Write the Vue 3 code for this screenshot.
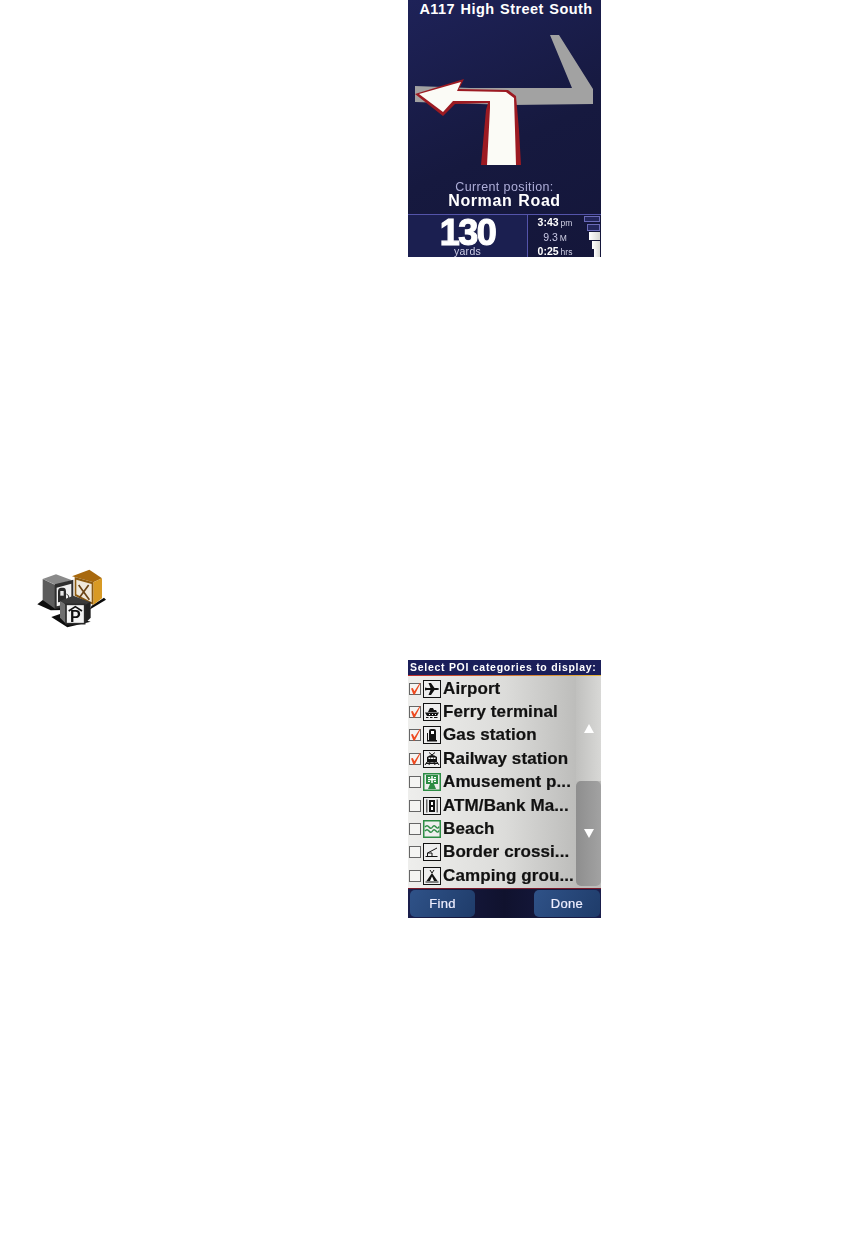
<script setup>
const rows = [
  { label: 'Airport', on: true, kind: 'plane' },
  { label: 'Ferry terminal', on: true, kind: 'ferry' },
  { label: 'Gas station', on: true, kind: 'gas' },
  { label: 'Railway station', on: true, kind: 'train' },
  { label: 'Amusement p...', on: false, kind: 'park', green: true },
  { label: 'ATM/Bank Ma...', on: false, kind: 'atm' },
  { label: 'Beach', on: false, kind: 'beach', green: true },
  { label: 'Border crossi...', on: false, kind: 'border' },
  { label: 'Camping grou...', on: false, kind: 'camp' }
]
const bars = [
  { w: 16, h: 6, mb: 2, lit: false },
  { w: 13, h: 7, mb: 1, lit: false },
  { w: 11, h: 8, mb: 1, lit: true },
  { w: 8, h: 8, mb: 0, lit: true },
  { w: 6, h: 8, mb: 0, lit: true }
]
</script>

<template>
  <main class="page">
    <section class="nav">
      <h1 class="street">A117 High Street South</h1>
      <svg class="map" viewBox="408 22 193 152" width="193" height="152">
        <polygon points="550,35 559,35 593,89 593,104 512,105 415,102 415,86 470,88 572,88" fill="#a2a2a2" />
        <polygon points="415,94 464,79 459,89 508,90 516,96 519,130 521,165 481,165 486,110 488,103 455,104 443,116" fill="#9c1a22" />
        <polygon points="419,94 461,82 457,91 506,92 514,98 515,130 516,165 487,165 490,108 490,101 453,101 443,112" fill="#fbfbf6" />
      </svg>
      <div class="where">
        <p class="where-label">Current position:</p>
        <p class="where-road">Norman Road</p>
      </div>
      <div class="stats">
        <div class="distance">
          <strong>130</strong>
          <span>yards</span>
        </div>
        <div class="trip">
          <p><b>3:43</b><small>pm</small></p>
          <p class="dim">9.3<small>M</small></p>
          <p><b>0:25</b><small>hrs</small></p>
        </div>
        <div class="bars">
          <i v-for="(b, n) in bars" :key="n" :class="{ lit: b.lit }"
             :style="{ width: b.w + 'px', height: b.h + 'px', marginBottom: b.mb + 'px' }"></i>
        </div>
      </div>
    </section>

    <svg class="poi-icon" viewBox="0 0 255 210" width="85" height="70">
      <!-- shadows -->
      <polygon points="22,118 42,102 105,135 62,136" fill="#0c0c0c" />
      <polygon points="185,122 222,98 228,104 178,134" fill="#0c0c0c" />
      <polygon points="64,156 92,146 182,170 112,187" fill="#0c0c0c" />
      <!-- pump cube -->
      <polygon points="38,42 78,28 126,46 78,60" fill="#8a8a8a" />
      <polygon points="38,42 76,60 76,132 38,105" fill="#5c5c5c" />
      <polygon points="74,58 130,44 130,122 74,132" fill="#2e2e2e" />
      <polygon points="80,68 124,56 124,114 80,124" fill="#f1f1f1" />
      <path d="M84 112V80q0-12 10-12h6q8 0 8 12v29z" fill="#2a2a2a" />
      <path d="M91 78h10v14H91z" fill="#e8e8e8" />
      <path d="M109 86l7 7v14" fill="none" stroke="#2a2a2a" stroke-width="3" />
      <!-- cutlery cube -->
      <polygon points="126,34 178,14 216,40 190,52" fill="#a8690e" />
      <polygon points="190,52 216,40 216,100 190,120" fill="#d89a24" />
      <polygon points="134,36 190,52 190,120 134,92" fill="#8c5a10" />
      <polygon points="139,44 185,57 185,112 139,88" fill="#efe9dc" />
      <path d="M146 60l32 44M176 60l-28 38" stroke="#6b4516" stroke-width="5" fill="none" />
      <!-- parking cube -->
      <polygon points="90,108 130,92 182,112 164,122 108,122" fill="#3a3a3a" />
      <polygon points="90,108 108,120 108,176 90,158" fill="#6e6e6e" />
      <polygon points="164,120 182,110 182,158 164,176" fill="#222" />
      <rect x="108" y="118" width="56" height="58" fill="#f4f4f4" stroke="#2a2a2a" stroke-width="5" />
      <path d="M116 138l20-13 20 13" fill="none" stroke="#111" stroke-width="5" />
      <text x="136" y="172" class="poi-p">P</text>
    </svg>

    <section class="list">
      <header class="list-head">Select POI categories to display:</header>
      <div class="list-body">
        <ul class="rows">
          <li v-for="r in rows" :key="r.label" class="row">
            <span class="check">
              <svg v-if="r.on" viewBox="0 0 12 12" width="12" height="12">
                <path d="M2 5.500L3.800 5 5.400 8.200 10.800 0 11.400 .5 5.800 11.500 4.400 11.500z" fill="#ee4a20" />
              </svg>
            </span>
            <span class="glyph" :class="{ green: r.green }">
              <svg viewBox="0 0 16 16" width="16" height="16" :fill="r.green ? '#2c8c44' : '#111'">
                <path v-if="r.kind === 'plane'" d="M1 6.500l2 .5h3.500L4.500 2H7l3.500 5H13q2 .2 2 1t-2 1h-2.500L7 14H4.500l2-5H3l-2 .5z" />
                <g v-else-if="r.kind === 'ferry'">
                  <path d="M6 4h3l1 2h2l1 2H4z" />
                  <path d="M1 8.500h14l-2 3.500H3z" />
                  <path d="M5 10h1v1H5zM8 10h1v1H8zM11 10h1v1h-1z" fill="#fff" />
                  <path d="M2 13.500h2.500M6 13.500h2.500M10 13.500h3.500" stroke="#111" fill="none" />
                </g>
                <g v-else-if="r.kind === 'gas'">
                  <path d="M5 13V4q0-2 2-2h3q2 0 2 2v9z" />
                  <path d="M7 4h3v3H7z" fill="#fff" />
                  <path d="M3.500 13V6" stroke="#111" fill="none" />
                  <path d="M3 13h10v1.500H3z" />
                </g>
                <g v-else-if="r.kind === 'train'">
                  <path d="M3 6q5-4 10 0v5H3z" />
                  <path d="M4.500 6.500h2V8h-2zM7 6.500h2V8H7zM9.500 6.500h2V8h-2z" fill="#fff" />
                  <path d="M1 14l2-3h10l2 3M5 14l1-3M11 14l-1-3M2 12.500h12M5 1.500l3 2.500 3-2.500" stroke="#111" fill="none" />
                </g>
                <g v-else-if="r.kind === 'park'">
                  <path d="M2 1h12v9H2z" />
                  <path d="M8 2v7M4 5.500h8" stroke="#fff" stroke-width="1.500" />
                  <path d="M4 3h2v1H4zM10 3h2v1h-2zM4 7h2v1H4zM10 7h2v1h-2z" fill="#fff" />
                  <path d="M4 15l2-5h4l2 5z" />
                </g>
                <g v-else-if="r.kind === 'atm'">
                  <path d="M2 1.500h1.500v13H2zM12.500 1.500H14v13h-1.500z" fill="#666" />
                  <path d="M5 2h6v12H5z" />
                  <path d="M7 4h2v3H7zM7 9h2v3H7z" fill="#fff" />
                </g>
                <g v-else-if="r.kind === 'beach'" fill="none" stroke="#2c8c44" stroke-width="1.400">
                  <path d="M1 6q2-2.500 4 0t3.500 0 3.500 0 3-.5M1 10q2-2.500 4 0t3.500 0 3.500 0 3-.5" />
                </g>
                <g v-else-if="r.kind === 'border'" fill="none" stroke="#111">
                  <path d="M1.500 12.500h12M3.500 12.500V9l9.500-5M3.500 9H8v3.500" />
                </g>
                <g v-else>
                  <path d="M8 5l5.500 8h-11z" />
                  <path d="M8 8.500l2 4.500H6z" fill="#fff" />
                  <path d="M6 2l2 3 2-3M1.500 14h13" stroke="#111" fill="none" />
                </g>
              </svg>
            </span>
            <span class="label">{{ r.label }}</span>
          </li>
        </ul>
        <div class="scroll">
          <div class="scroll-up"><i class="tri up"></i></div>
          <div class="scroll-down"><i class="tri down"></i></div>
        </div>
      </div>
      <footer class="list-foot">
        <button class="btn find">Find</button>
        <button class="btn done">Done</button>
      </footer>
    </section>
  </main>
</template>

<style>
html, body { background: #fff; }
</style>

<style scoped>
.page {
  width: 863px;
  height: 1248px;
  background: #fff;
  font-family: "Liberation Sans", Arial, sans-serif;
  overflow: hidden;
}
p, h1, ul { margin: 0; padding: 0; }
.nav {
  width: 193px;
  height: 257px;
  margin-left: 408px;
  display: flex;
  flex-direction: column;
  background: linear-gradient(155deg, #1e2258 0%, #16193f 55%, #14163a 100%);
  filter: blur(.35px);
}
.street {
  height: 22px;
  flex: none;
  padding-left: 3px;
  color: #fff;
  font-size: 14.500px;
  font-weight: 700;
  line-height: 18px;
  text-align: center;
  letter-spacing: .45px;
  word-spacing: 1px;
  white-space: nowrap;
}
.map { display: block; flex: none; }
.where {
  height: 40px;
  flex: none;
  text-align: center;
}
.where-label {
  font-size: 12.500px;
  line-height: 13px;
  color: #aeaed8;
  letter-spacing: .4px;
  padding-top: 7px;
}
.where-road {
  font-size: 16px;
  font-weight: 700;
  line-height: 14px;
  color: #fff;
  letter-spacing: .6px;
  word-spacing: 1px;
}
.stats {
  height: 42px;
  flex: none;
  border-top: 1px solid #5454aa;
  display: flex;
  position: relative;
}
.distance {
  width: 120px;
  box-sizing: border-box;
  border-right: 1px solid #5454aa;
  text-align: center;
  color: #fff;
  background: #1b1f50;
  display: flex;
  flex-direction: column;
  align-items: center;
}
.distance strong {
  font-size: 36px;
  line-height: 26px;
  height: 26px;
  letter-spacing: -1.5px;
  -webkit-text-stroke: 1.2px #fff;
  padding-top: 5px;
}
.distance span {
  font-size: 10.500px;
  line-height: 10px;
  color: #cfcfe6;
  letter-spacing: .3px;
}
.trip {
  width: 50px;
  padding-left: 2px;
  color: #fff;
  text-align: center;
  font-size: 10.500px;
  line-height: 14.500px;
}
.trip .dim { color: #c8c8e4; }
.trip small {
  font-size: 8.500px;
  line-height: 0;
  margin-left: 2px;
  color: #d0d0e4;
}
.bars {
  position: absolute;
  right: 1px;
  top: 1px;
  display: flex;
  flex-direction: column;
  align-items: flex-end;
}
.bars i {
  display: block;
  box-sizing: border-box;
  border: 1px solid #6a6ab8;
  background: #23265c;
}
.bars i.lit {
  border: 0;
  background: linear-gradient(90deg, #fff, #d8d8d4);
}
.poi-icon {
  display: block;
  margin: 308px 0 0 30px;
  filter: blur(.35px);
}
.poi-p {
  font-size: 48px;
  font-weight: 700;
  text-anchor: middle;
  fill: #111;
}
.list {
  width: 193px;
  height: 258px;
  margin: 25px 0 0 408px;
  display: flex;
  flex-direction: column;
  background: #14163a;
  filter: blur(.3px);
}
.list-head {
  height: 15px;
  flex: none;
  background: #1b1f5a;
  border-bottom: 1px solid;
  border-image: linear-gradient(90deg, #c02a2a, #e8b83a) 1;
  color: #fff;
  font-size: 10.500px;
  font-weight: 700;
  line-height: 15px;
  padding-left: 2px;
  letter-spacing: .72px;
  white-space: nowrap;
}
.list-body {
  height: 212px;
  flex: none;
  display: flex;
  background: linear-gradient(90deg, #eeeeec 0%, #dcdcda 50%, #bcbcba 88%);
  border-bottom: 1px solid #7a1a2a;
}
.rows {
  list-style: none;
  width: 168px;
  padding-top: 1px;
}
.row {
  height: 23.400px;
  display: flex;
  align-items: center;
  white-space: nowrap;
}
.check {
  width: 12px;
  height: 12px;
  box-sizing: border-box;
  margin-left: 1px;
  border: 1px solid #666;
  background: #f4f4f2;
  display: block;
  flex: none;
  position: relative;
}
.check svg { position: absolute; left: -1px; top: -1px; }
.glyph {
  width: 18px;
  height: 18px;
  box-sizing: border-box;
  margin-left: 2px;
  border: 1px solid #111;
  background: #eee;
  flex: none;
  display: block;
}
.glyph.green { border-color: #2c8c44; box-shadow: inset 0 0 0 .5px #2c8c44; }
.glyph svg { display: block; }
.label {
  margin-left: 2px;
  font-size: 17px;
  font-weight: 700;
  color: #111;
  letter-spacing: .1px;
  -webkit-text-stroke: .2px #111;
}
.scroll {
  width: 25px;
  display: flex;
  flex-direction: column;
  padding-bottom: 1px;
}
.scroll-up {
  height: 105px;
  background: linear-gradient(90deg, #c0c0be, #d8d8d6);
  display: flex;
  align-items: center;
  justify-content: center;
}
.scroll-down {
  height: 105px;
  background: linear-gradient(90deg, #8e8e8e, #a2a2a2);
  border-radius: 5px;
  display: flex;
  align-items: center;
  justify-content: center;
}
.tri {
  width: 0;
  height: 0;
  border-left: 5px solid transparent;
  border-right: 5px solid transparent;
}
.tri.up { border-bottom: 9px solid #fff; }
.tri.down { border-top: 9px solid #fff; }
.list-foot {
  flex: 1;
  display: flex;
  justify-content: space-between;
  padding: 1px 1px 1px 2px;
  background: linear-gradient(90deg, #1a1e4c, #10122e 50%, #1a1e4c);
}
.btn {
  border: 0;
  padding: 0;
  font-family: inherit;
  font-size: 13px;
  color: #eef;
  letter-spacing: .3px;
  -webkit-text-stroke: .2px #eef;
  border-radius: 5px;
  background: linear-gradient(120deg, #2f5288, #1f3c6a);
}
.find { width: 65px; }
.done { width: 66px; }
</style>
